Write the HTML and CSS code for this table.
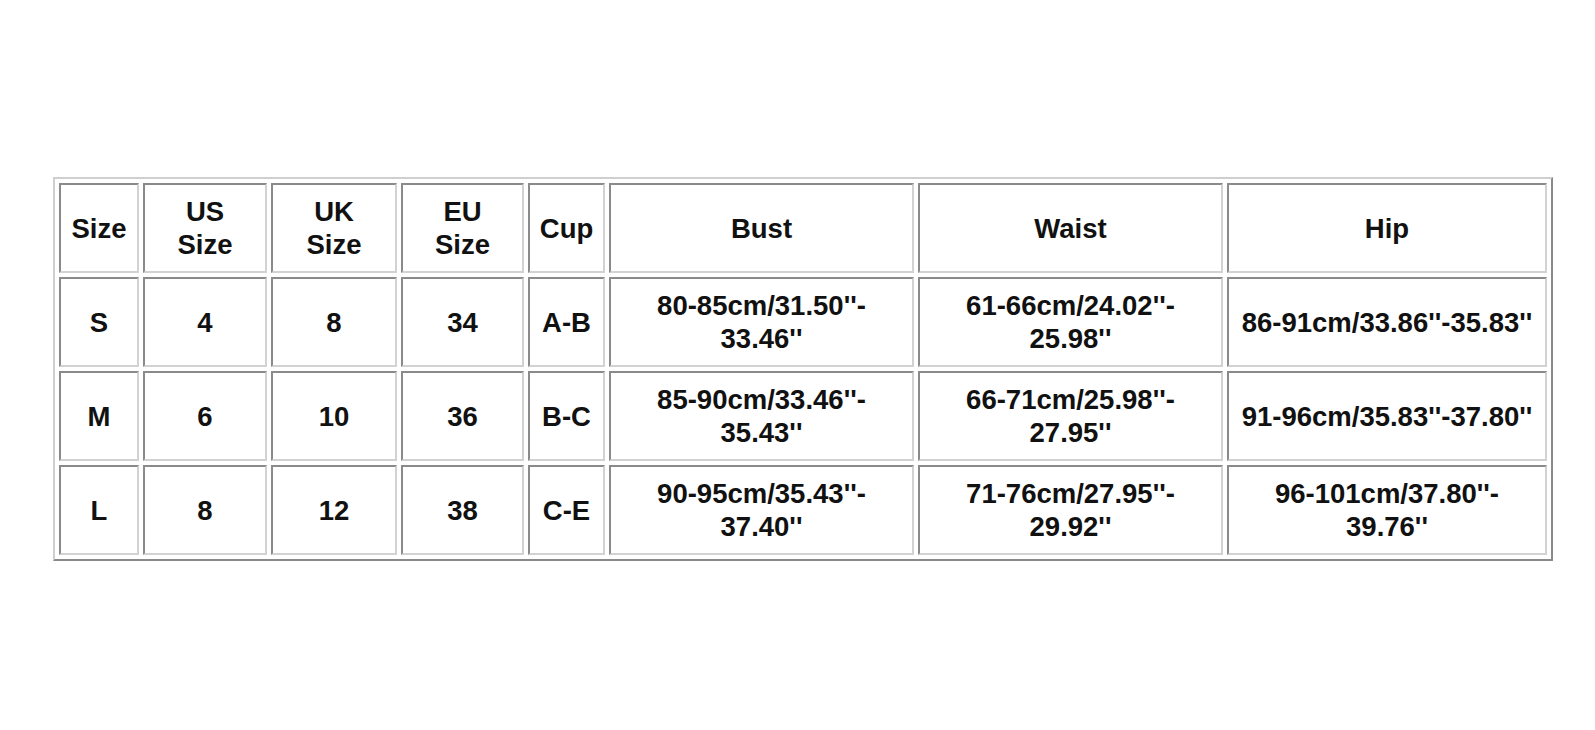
FILE: index.html
```html
<!DOCTYPE html>
<html>
<head>
<meta charset="utf-8">
<link rel="stylesheet" href="styles.css">
</head>
<body>
<div class="page">
<table class="chart">
<colgroup>
<col class="c1"><col class="c2"><col class="c3"><col class="c4"><col class="c5"><col class="c6"><col class="c7"><col class="c8">
</colgroup>
<tr>
<td>Size</td><td>US<br>Size</td><td>UK<br>Size</td><td>EU<br>Size</td><td>Cup</td><td>Bust</td><td>Waist</td><td>Hip</td>
</tr>
<tr>
<td>S</td><td>4</td><td>8</td><td>34</td><td>A-B</td><td>80-85cm/31.50''-<br>33.46''</td><td>61-66cm/24.02''-<br>25.98''</td><td>86-91cm/33.86''-35.83''</td>
</tr>
<tr>
<td>M</td><td>6</td><td>10</td><td>36</td><td>B-C</td><td>85-90cm/33.46''-<br>35.43''</td><td>66-71cm/25.98''-<br>27.95''</td><td>91-96cm/35.83''-37.80''</td>
</tr>
<tr>
<td>L</td><td>8</td><td>12</td><td>38</td><td>C-E</td><td>90-95cm/35.43''-<br>37.40''</td><td>71-76cm/27.95''-<br>29.92''</td><td>96-101cm/37.80''-<br>39.76''</td>
</tr>
</table>
</div>
</body>
</html>
```
FILE: styles.css
```css
html, body {
  margin: 0;
  padding: 0;
  background: #ffffff;
}
.page {
  padding: 177px 0 0 53px;
}
.chart {
  table-layout: fixed;
  border-collapse: separate;
  border-spacing: 4px;
  border: 2px solid;
  border-color: #cfcfcf #8a8a8a #8a8a8a #cfcfcf;
  font-family: "Liberation Sans", Arial, sans-serif;
  font-weight: bold;
  font-size: 27.5px;
  line-height: 33px;
  color: #111;
  width: 1500px;
}
.chart td {
  border: 2px solid;
  border-color: #8a8a8a #d2d2d2 #d2d2d2 #8a8a8a;
  height: 86px;
  padding: 0;
  text-align: center;
  vertical-align: middle;
}
.c1 { width: 80px; }
.c2 { width: 124px; }
.c3 { width: 126px; }
.c4 { width: 123px; }
.c5 { width: 77px; }
.c6 { width: 305px; }
.c7 { width: 305px; }
.c8 { width: 320px; }
```
